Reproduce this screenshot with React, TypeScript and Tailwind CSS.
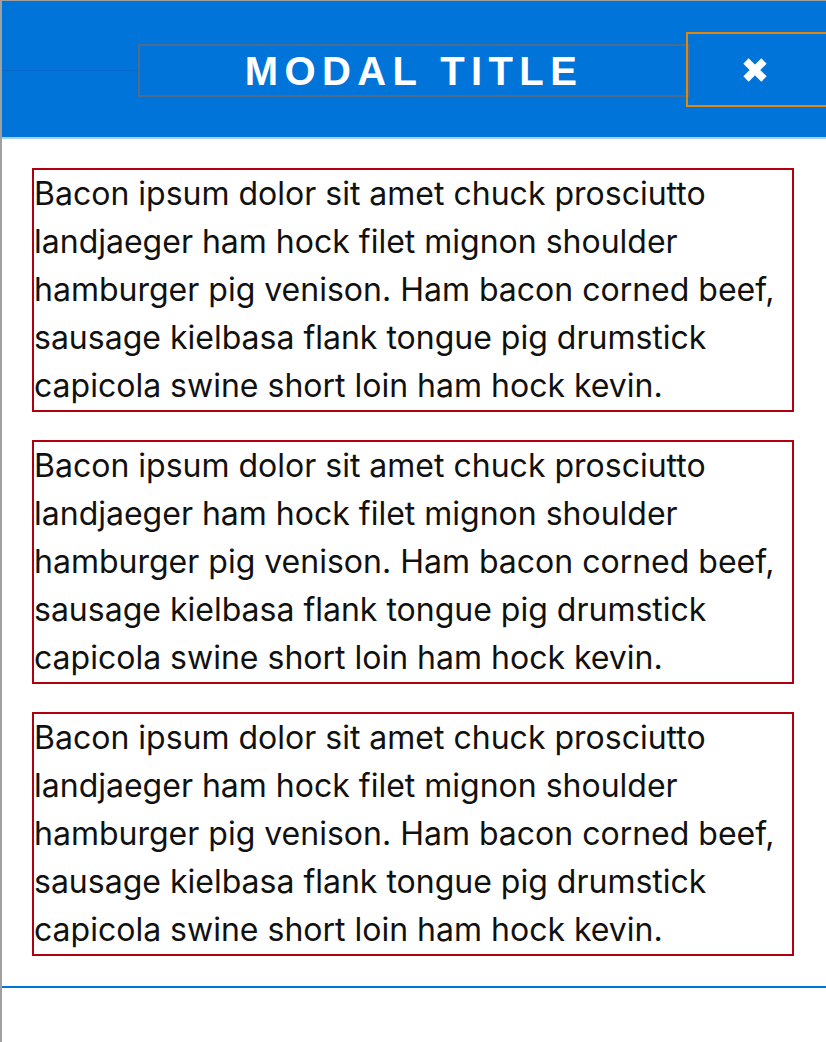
const LINES = [
  "Bacon ipsum dolor sit amet chuck prosciutto",
  "landjaeger ham hock filet mignon shoulder",
  "hamburger pig venison. Ham bacon corned beef,",
  "sausage kielbasa flank tongue pig drumstick",
  "capicola swine short loin ham hock kevin.",
];

function CloseIcon() {
  return (
    <svg width="26" height="26" viewBox="0 0 26 26" aria-hidden>
      <path
        d="M4 4L22 22M22 4L4 22"
        stroke="white"
        strokeWidth="7.5"
        strokeLinecap="butt"
      />
    </svg>
  );
}

export default function App() {
  return (
    <div className="min-h-screen border-l-2 border-t border-[#a0a0a0] bg-white font-['Inter',sans-serif] text-[#111]">
      {/* Header */}
      <header className="flex h-[138px] items-start overflow-hidden border-b-2 border-[#a8d3f0] bg-[#0074d9]">
        <div className="mt-[69px] h-px w-[136px] flex-none bg-[#0a68c9]" />
        <div className="mt-[43px] flex h-[53px] w-[552px] flex-none items-center justify-center border-2 border-[#4d6b8c]">
          <h1 className="font-['Liberation_Sans',sans-serif] text-[40px] font-bold uppercase leading-none tracking-[0.16em] text-white">
            Modal Title
          </h1>
        </div>
        <button
          type="button"
          aria-label="Close"
          className="-ml-[4px] mt-[31px] flex h-[75px] w-[170px] flex-none items-center border-2 border-[#e0870d] pl-[54px]"
        >
          <CloseIcon />
        </button>
      </header>

      {/* Body */}
      <main className="flex flex-col gap-[28px] border-b-2 border-[#0074d9] pb-[30px] pl-[30px] pt-[29px]">
        {[0, 1, 2].map((i) => (
          <p
            key={i}
            className="w-[762px] border-2 border-[#b0000f] text-[32px] leading-[48px] whitespace-nowrap"
          >
            {LINES.map((l, j) => (
              <span key={j} className="block">
                {l}
              </span>
            ))}
          </p>
        ))}
      </main>
    </div>
  );
}
